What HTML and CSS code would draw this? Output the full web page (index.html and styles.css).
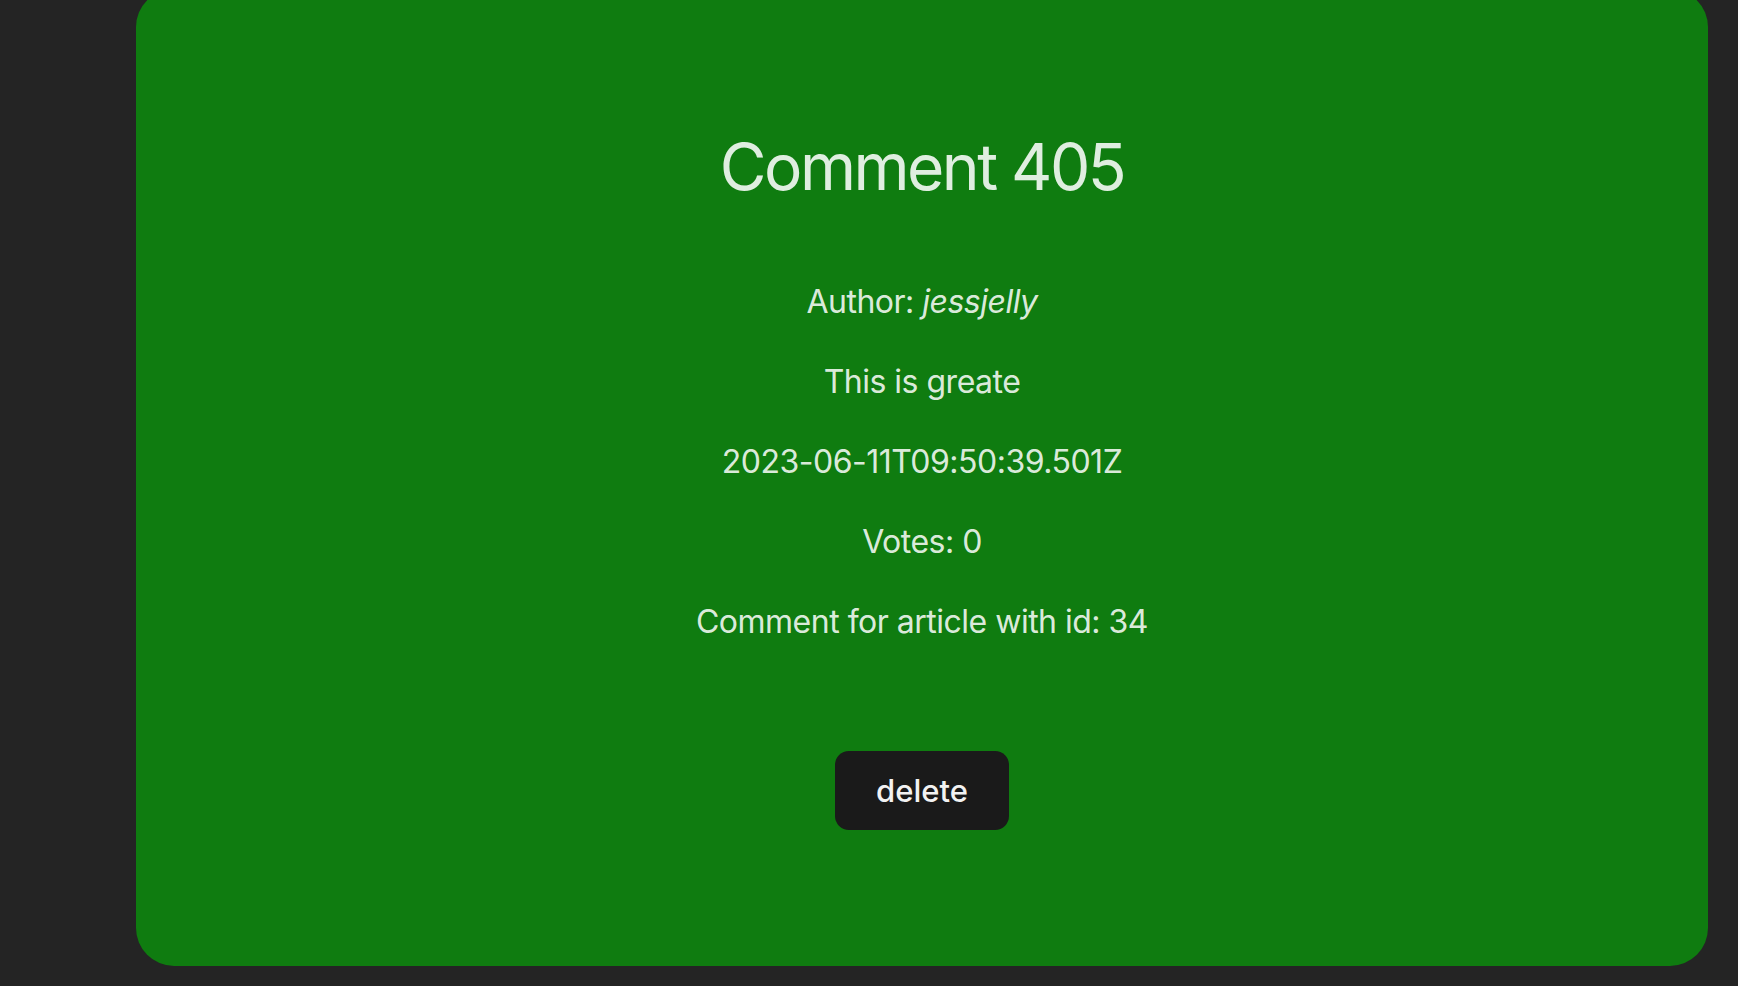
FILE: index.html
```html
<!DOCTYPE html>
<html lang="en">
<head>
<meta charset="utf-8">
<title>Comment 405</title>
<link rel="stylesheet" href="styles.css">
</head>
<body>
<main class="card">
  <h1 class="title">Comment 405</h1>
  <p class="line">Author: <em>jessjelly</em></p>
  <p class="line">This is greate</p>
  <p class="line">2023-06-11T09:50:39.501Z</p>
  <p class="line">Votes: 0</p>
  <p class="line">Comment for article with id: 34</p>
  <div class="actions">
    <button class="btn" type="button">delete</button>
  </div>
</main>
</body>
</html>
```

FILE: styles.css
```css
html, body {
  margin: 0;
  padding: 0;
}
body {
  background: #242424;
  font-family: Inter, "Noto Sans", "Liberation Sans", sans-serif;
  color: rgba(255, 255, 255, 0.87);
  overflow: hidden;
  height: 986px;
}
.card {
  box-sizing: border-box;
  margin: -11px 0 0 136px;
  width: 1572px;
  padding: 143px 0 136px;
  background: #0f7c10;
  border-radius: 38px;
  text-align: center;
}
.title {
  margin: 0 0 76px;
  font-size: 64px;
  font-weight: 400;
  line-height: 1.1;
  letter-spacing: -2.5px;
}
.line {
  margin: 32px 0;
  font-size: 32px;
  line-height: 48px;
  letter-spacing: -0.5px;
}
.actions {
  margin-top: 105px;
}
.btn {
  box-sizing: border-box;
  height: 79px;
  width: 174px;
  padding: 0;
  border: 1px solid transparent;
  border-radius: 14px;
  background: #1a1a1a;
  color: #f2f2f2;
  font-family: Inter, "Noto Sans", "Liberation Sans", sans-serif;
  font-size: 31px;
  font-weight: 500;
  line-height: 1.5;
  cursor: pointer;
}
```
